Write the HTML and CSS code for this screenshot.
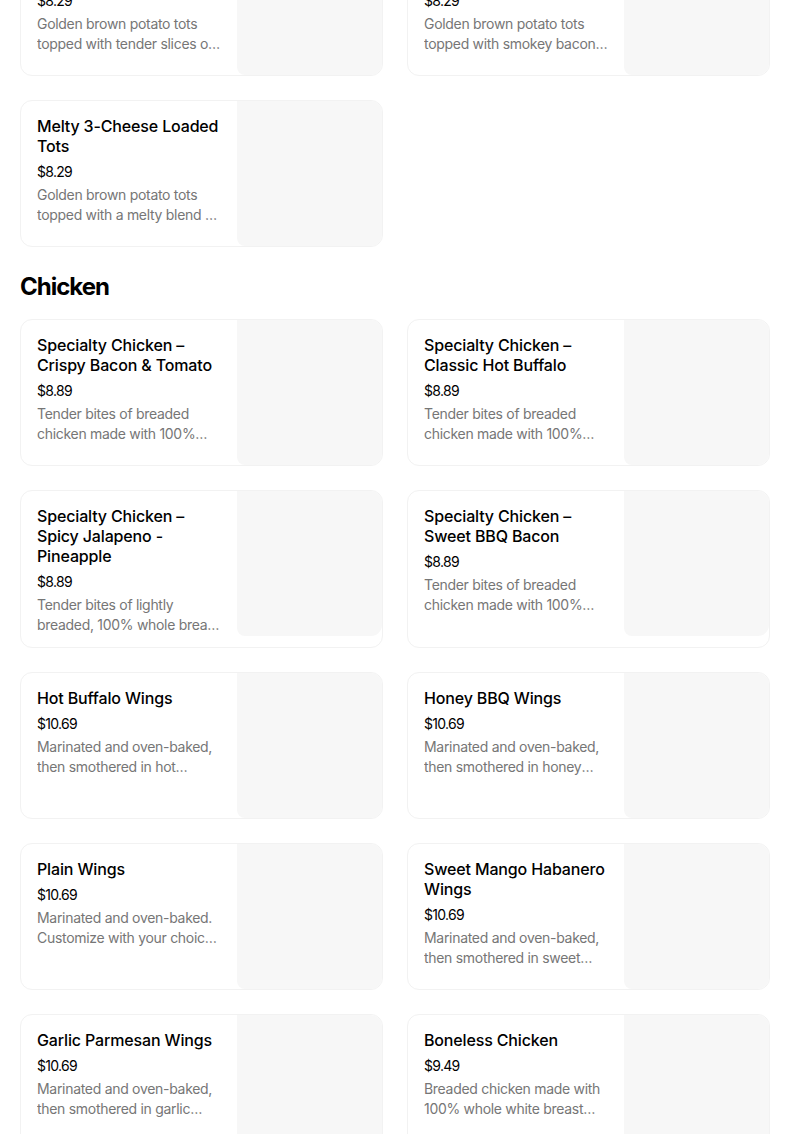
FILE: index.html
```html
<!DOCTYPE html>
<html>
<head>
<meta charset="utf-8">
<link rel="stylesheet" href="styles.css">
</head>
<body>
<main class="menu">
  <section class="section">
    <div class="grid">
      <div class="card">
        <div class="info">
          <div class="title">Philly Cheesesteak Loaded Tots</div>
          <div class="price">$8.29</div>
          <div class="desc">Golden brown potato tots topped with tender slices of steak, peppers and onions</div>
        </div>
        <div class="pic"></div>
      </div>
      <div class="card">
        <div class="info">
          <div class="title">Bacon Ranch Loaded Tots</div>
          <div class="price">$8.29</div>
          <div class="desc">Golden brown potato tots topped with smokey bacon, cheese and ranch</div>
        </div>
        <div class="pic"></div>
      </div>
      <div class="card">
        <div class="info">
          <div class="title">Melty 3-Cheese Loaded Tots</div>
          <div class="price">$8.29</div>
          <div class="desc">Golden brown potato tots topped with a melty blend of three cheeses</div>
        </div>
        <div class="pic"></div>
      </div>
    </div>
  </section>

  <section class="section">
    <h2 class="heading">Chicken</h2>
    <div class="grid">
      <div class="card">
        <div class="info">
          <div class="title">Specialty Chicken – Crispy Bacon &amp; Tomato</div>
          <div class="price">$8.89</div>
          <div class="desc">Tender bites of breaded chicken made with 100% whole breast white meat</div>
        </div>
        <div class="pic"></div>
      </div>
      <div class="card">
        <div class="info">
          <div class="title">Specialty Chicken – Classic Hot Buffalo</div>
          <div class="price">$8.89</div>
          <div class="desc">Tender bites of breaded chicken made with 100% whole breast white meat</div>
        </div>
        <div class="pic"></div>
      </div>
      <div class="card">
        <div class="info">
          <div class="title">Specialty Chicken – Spicy Jalapeno - Pineapple</div>
          <div class="price">$8.89</div>
          <div class="desc">Tender bites of lightly breaded, 100% whole breast white meat chicken</div>
        </div>
        <div class="pic"></div>
      </div>
      <div class="card">
        <div class="info">
          <div class="title">Specialty Chicken – Sweet BBQ Bacon</div>
          <div class="price">$8.89</div>
          <div class="desc">Tender bites of breaded chicken made with 100% whole breast white meat</div>
        </div>
        <div class="pic"></div>
      </div>
      <div class="card">
        <div class="info">
          <div class="title">Hot Buffalo Wings</div>
          <div class="price">$10.69</div>
          <div class="desc">Marinated and oven-baked, then smothered in hot buffalo sauce</div>
        </div>
        <div class="pic"></div>
      </div>
      <div class="card">
        <div class="info">
          <div class="title">Honey BBQ Wings</div>
          <div class="price">$10.69</div>
          <div class="desc">Marinated and oven-baked, then smothered in honey BBQ sauce</div>
        </div>
        <div class="pic"></div>
      </div>
      <div class="card">
        <div class="info">
          <div class="title">Plain Wings</div>
          <div class="price">$10.69</div>
          <div class="desc">Marinated and oven-baked. Customize with your choice of dipping sauce</div>
        </div>
        <div class="pic"></div>
      </div>
      <div class="card">
        <div class="info">
          <div class="title">Sweet Mango Habanero Wings</div>
          <div class="price">$10.69</div>
          <div class="desc">Marinated and oven-baked, then smothered in sweet mango habanero sauce</div>
        </div>
        <div class="pic"></div>
      </div>
      <div class="card">
        <div class="info">
          <div class="title">Garlic Parmesan Wings</div>
          <div class="price">$10.69</div>
          <div class="desc">Marinated and oven-baked, then smothered in garlic parmesan sauce</div>
        </div>
        <div class="pic"></div>
      </div>
      <div class="card">
        <div class="info">
          <div class="title">Boneless Chicken</div>
          <div class="price">$9.49</div>
          <div class="desc">Breaded chicken made with 100% whole white breast meat</div>
        </div>
        <div class="pic"></div>
      </div>
    </div>
  </section>
</main>
</body>
</html>
```

FILE: styles.css
```css
html, body {
  margin: 0;
  padding: 0;
  background: #ffffff;
}

body {
  font-family: "Inter", "Liberation Sans", sans-serif;
  color: #000000;
  overflow: hidden;
}

.menu {
  width: 750px;
  margin: -71px 0 0 20px;
}

.section + .section {
  margin-top: 24px;
}

.heading {
  margin: 0 0 16px;
  font-size: 24px;
  line-height: 32px;
  font-weight: 700;
  letter-spacing: -1px;
}

.grid {
  display: grid;
  grid-template-columns: 363px 363px;
  column-gap: 24px;
  row-gap: 24px;
  align-items: stretch;
}

.card {
  display: flex;
  align-items: flex-start;
  border: 1px solid #f2f2f2;
  border-radius: 12px;
  overflow: hidden;
  box-sizing: border-box;
  min-height: 147px;
}

.info {
  flex: 1;
  min-width: 0;
  padding: 15px 16px 12px 16px;
}

.title {
  font-size: 16px;
  line-height: 20px;
  font-weight: 500;
  letter-spacing: -0.15px;
}

.price {
  margin-top: 6px;
  font-size: 14px;
  line-height: 20px;
  letter-spacing: -0.7px;
}

.desc {
  margin-top: 3px;
  font-size: 14px;
  line-height: 20px;
  color: #767676;
  letter-spacing: -0.3px;
  display: -webkit-box;
  -webkit-line-clamp: 2;
  -webkit-box-orient: vertical;
  overflow: hidden;
}

.pic {
  flex: none;
  width: 145px;
  height: 145px;
  background: #f7f7f7;
  border-radius: 0 11px 11px 8px;
}
```
